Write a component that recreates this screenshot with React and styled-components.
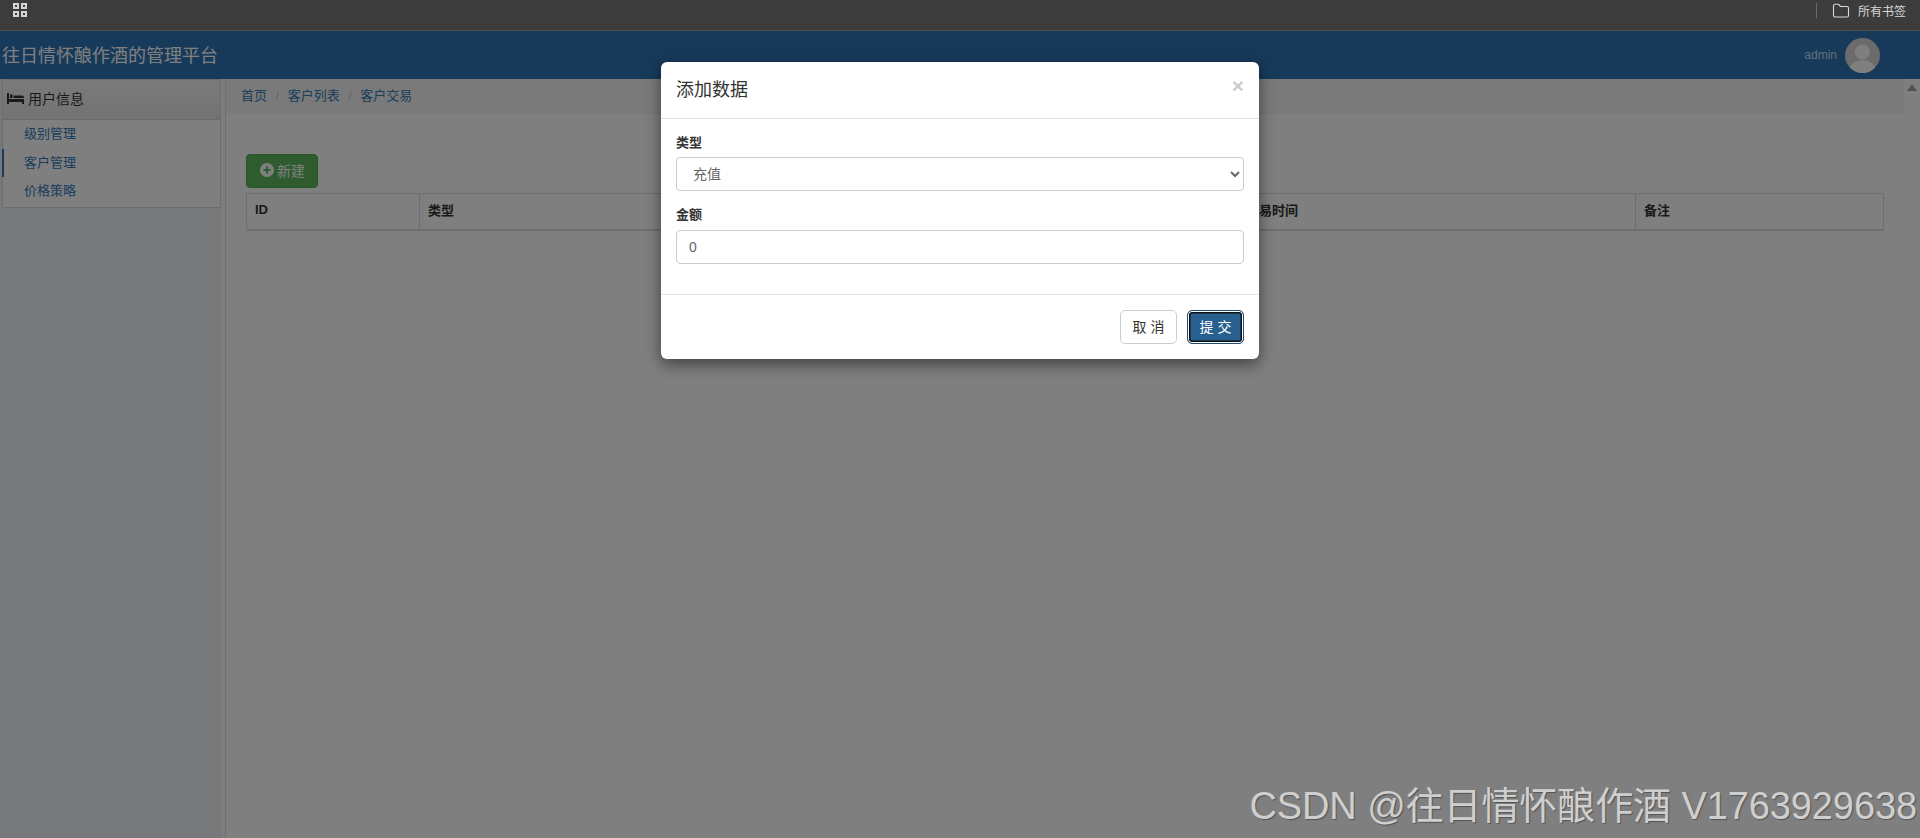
import React from 'react';
import styled, { createGlobalStyle } from 'styled-components';
import { Folder } from 'lucide-react';

const FONT = '"Liberation Sans", "Noto Sans CJK SC", sans-serif';

const GlobalStyle = createGlobalStyle`
  html, body { margin: 0; padding: 0; height: 100%; overflow: hidden; background: #fff; }
  body { font-family: ${FONT}; font-size: 14px; color: #333; }
  * { box-sizing: border-box; }
`;

const Page = styled.div`
  position: relative;
  display: flex;
  flex-direction: column;
  width: 1920px;
  height: 838px;
  overflow: hidden;
`;

const BookmarkBar = styled.div`
  display: flex;
  align-items: flex-start;
  justify-content: space-between;
  height: 31px;
  padding: 3px 14px 0 13px;
  background: #3c3c3c;
  border-bottom: 1px solid #4e4e4e;
`;

const AllBookmarks = styled.div`
  display: flex;
  align-items: center;
  height: 15px;
  color: #d8d8d8;
  font-size: 12px;
`;

const Separator = styled.span`
  width: 1px;
  height: 15px;
  margin-right: 15px;
  background: #6a6a6a;
`;

const BookmarkLabel = styled.span`
  margin-left: 8px;
`;

const Navbar = styled.header`
  display: flex;
  align-items: center;
  justify-content: space-between;
  height: 48px;
  padding: 0 40px 0 2px;
  background: #2e74b4;
`;

const Brand = styled.div`
  padding-bottom: 2px;
  color: #fff;
  font-size: 18px;
`;

const UserBox = styled.div`
  display: flex;
  align-items: center;
  gap: 8px;
  color: #c4e0ee;
  font-size: 12px;
`;

const Body = styled.div`
  display: flex;
  flex: 1;
  min-height: 0;
`;

const Sidebar = styled.aside`
  width: 226px;
  padding-right: 4px;
  background: #fafafa;
  border-right: 1px solid #e0e0e0;
`;

const SidebarFill = styled.div`
  height: 100%;
  padding-left: 2px;
  background: #ecf0f4;
`;

const MenuHeading = styled.div`
  display: flex;
  align-items: center;
  gap: 4px;
  height: 41px;
  padding: 0 0 3px 4px;
  color: #333;
  font-size: 14px;
  background: linear-gradient(#f5f5f5, #e6e6e6);
  border: 1px solid #ddd;
  border-bottom-color: #d4d4d4;
`;

const MenuList = styled.ul`
  margin: 0;
  padding: 0 0 1px;
  list-style: none;
  background: #fff;
  border: 1px solid #ddd;
  border-top: 0;
`;

const MenuItem = styled.li`
  height: 28.5px;
  margin-left: -1px;
  padding-left: 20px;
  color: #337ab7;
  font-size: 13px;
  line-height: 28px;
  border-left: 2px solid ${(p) => (p.$active ? '#337ab7' : 'transparent')};
`;

const Main = styled.main`
  flex: 1;
  min-width: 0;
`;

const Breadcrumb = styled.ol`
  display: flex;
  align-items: center;
  height: 35px;
  margin: 0 0 40px;
  padding: 0 15px 4px;
  list-style: none;
  font-size: 13px;
  background: #f5f5f5;
  border-radius: 0 0 4px 4px;
`;

const Crumb = styled.li`
  color: #337ab7;
  & + &::before {
    content: '/';
    padding: 0 8.5px;
    color: #ccc;
  }
`;

const Content = styled.div`
  padding: 0 20px;
`;

const NewButton = styled.button`
  display: flex;
  align-items: center;
  gap: 3px;
  width: 72px;
  height: 34px;
  margin-bottom: 5px;
  padding: 0 0 2px 13px;
  color: #fff;
  font-family: ${FONT};
  font-size: 14px;
  background: #5cb85c;
  border: 1px solid #4cae4c;
  border-radius: 4px;
`;

const Table = styled.table`
  width: 1637px;
  border-collapse: collapse;
  table-layout: fixed;
`;

const HeadCell = styled.th`
  width: ${(p) => p.$width}px;
  height: 36px;
  padding: 0 8px 4px;
  color: #333;
  font-size: 13px;
  font-weight: 700;
  text-align: left;
  border: 1px solid #ddd;
  border-bottom-width: 2px;
`;

const Scrollbar = styled.div`
  display: flex;
  justify-content: center;
  width: 16px;
  padding-top: 5px;
  background: #fff;
`;

const ScrollArrow = styled.span`
  width: 0;
  height: 0;
  border-left: 5px solid transparent;
  border-right: 5px solid transparent;
  border-bottom: 7px solid #a0a0a0;
`;

const Backdrop = styled.div`
  position: absolute;
  top: 31px;
  left: 0;
  right: 0;
  bottom: 0;
  background: rgba(0, 0, 0, 0.5);
`;

const Modal = styled.div`
  position: absolute;
  top: 62px;
  left: 661px;
  width: 598px;
  height: 297px;
  background: #fff;
  border-radius: 6px;
  box-shadow: 0 5px 15px rgba(0, 0, 0, 0.5);
`;

const ModalHeader = styled.div`
  display: flex;
  align-items: center;
  justify-content: space-between;
  height: 57px;
  padding: 0 15px 5px;
  border-bottom: 1px solid #e5e5e5;
`;

const ModalTitle = styled.h4`
  margin: 0;
  color: #333;
  font-size: 18px;
  font-weight: 400;
`;

const CloseMark = styled.span`
  margin-top: -5px;
  color: #000;
  font-size: 21px;
  font-weight: 700;
  line-height: 1;
  opacity: 0.2;
`;

const ModalBody = styled.div`
  height: 175px;
  padding: 15px 15px 0;
`;

const FieldLabel = styled.label`
  display: block;
  height: 23px;
  color: #333;
  font-size: 13px;
  font-weight: 700;
  line-height: 18px;
`;

const fieldStyle = `
  display: block;
  width: 100%;
  height: 34px;
  padding: 6px 12px;
  color: #666;
  font-family: ${FONT};
  font-size: 14px;
  background: #fff;
  border: 1px solid #ccc;
  border-radius: 4px;
`;

const SelectField = styled.select`
  ${fieldStyle}
  margin-bottom: 15px;
`;

const InputField = styled.input`
  ${fieldStyle}
  margin-top: 1px;
`;

const ModalFooter = styled.div`
  display: flex;
  justify-content: flex-end;
  gap: 10px;
  height: 65px;
  padding: 15px 15px 0;
  border-top: 1px solid #e5e5e5;
`;

const FooterButton = styled.button`
  width: 57px;
  height: 34px;
  padding: 0 0 2px;
  color: ${(p) => (p.$primary ? '#fff' : '#333')};
  font-family: ${FONT};
  font-size: 14px;
  background: ${(p) => (p.$primary ? '#286090' : '#fff')};
  border: 1px solid ${(p) => (p.$primary ? '#204d74' : '#ccc')};
  border-radius: 5px;
  box-shadow: ${(p) => (p.$primary ? 'inset 0 0 0 1px #fff, inset 0 0 0 2.5px #101010' : 'none')};
`;

const Watermark = styled.div`
  position: absolute;
  right: 3px;
  bottom: 10px;
  color: #cfcfcf;
  font-size: 38px;
  line-height: 44px;
  letter-spacing: -0.1px;
  white-space: nowrap;
  text-shadow: 1px 1px 1px rgba(0, 0, 0, 0.35);
`;

const AppsIcon = () => (
  <svg width="14" height="14" viewBox="0 0 14 14" aria-hidden="true">
    <path fill="#d4d4d4" fillRule="evenodd" d="M0 0h6v6H0zM2 2v2h2V2zM8 0h6v6H8zM10 2v2h2V2zM0 8h6v6H0zM2 10v2h2v-2zM8 8h6v6H8zM10 10v2h2v-2z" />
  </svg>
);

const BedIcon = () => (
  <svg width="17" height="11" viewBox="0 0 17 11" aria-hidden="true">
    <path fill="#333" d="M0 0h2v6h15v5h-2V9H2v2H0zM3 1.500h2.500v3.500H3zM6.500 2.500H15A2 2 0 0 1 17 4.500V5H6.500z" />
  </svg>
);

const PlusCircleIcon = () => (
  <svg width="14" height="14" viewBox="0 0 14 14" aria-hidden="true">
    <circle cx="7" cy="7" r="7" fill="#fff" />
    <path fill="#5cb85c" d="M6 3.500h2V6h2.500v2H8v2.500H6V8H3.500V6H6z" />
  </svg>
);

const Avatar = () => (
  <svg width="35" height="35" viewBox="0 0 35 35" aria-hidden="true">
    <defs>
      <clipPath id="avatar-clip"><circle cx="17.500" cy="17.500" r="17.500" /></clipPath>
    </defs>
    <g clipPath="url(#avatar-clip)">
      <rect width="35" height="35" fill="#d6d6d6" />
      <circle cx="17.500" cy="14" r="7.500" fill="#fff" />
      <ellipse cx="17.500" cy="32" rx="13" ry="10" fill="#fff" />
    </g>
  </svg>
);

const columns = [
  { label: 'ID', width: 173 },
  { label: '类型', width: 272 },
  { label: '金额', width: 273 },
  { label: '余额', width: 273 },
  { label: '交易时间', width: 398 },
  { label: '备注', width: 248 },
];

const App = () => (
  <Page>
    <GlobalStyle />
    <BookmarkBar>
      <AppsIcon />
      <AllBookmarks>
        <Separator />
        <Folder size={18} strokeWidth={1.5} color="#d8d8d8" />
        <BookmarkLabel>所有书签</BookmarkLabel>
      </AllBookmarks>
    </BookmarkBar>
    <Navbar>
      <Brand>往日情怀酿作酒的管理平台</Brand>
      <UserBox>
        admin
        <Avatar />
      </UserBox>
    </Navbar>
    <Body>
      <Sidebar>
        <SidebarFill>
          <MenuHeading>
            <BedIcon />
            用户信息
          </MenuHeading>
          <MenuList>
            <MenuItem>级别管理</MenuItem>
            <MenuItem $active>客户管理</MenuItem>
            <MenuItem>价格策略</MenuItem>
          </MenuList>
        </SidebarFill>
      </Sidebar>
      <Main>
        <Breadcrumb>
          <Crumb>首页</Crumb>
          <Crumb>客户列表</Crumb>
          <Crumb>客户交易</Crumb>
        </Breadcrumb>
        <Content>
          <NewButton>
            <PlusCircleIcon />
            新建
          </NewButton>
          <Table>
            <thead>
              <tr>
                {columns.map((col) => (
                  <HeadCell key={col.label} $width={col.width}>{col.label}</HeadCell>
                ))}
              </tr>
            </thead>
          </Table>
        </Content>
      </Main>
      <Scrollbar>
        <ScrollArrow />
      </Scrollbar>
    </Body>
    <Backdrop />
    <Modal>
      <ModalHeader>
        <ModalTitle>添加数据</ModalTitle>
        <CloseMark>×</CloseMark>
      </ModalHeader>
      <ModalBody>
        <FieldLabel>类型</FieldLabel>
        <SelectField defaultValue="1">
          <option value="1">充值</option>
          <option value="2">扣款</option>
        </SelectField>
        <FieldLabel>金额</FieldLabel>
        <InputField defaultValue="0" />
      </ModalBody>
      <ModalFooter>
        <FooterButton>取 消</FooterButton>
        <FooterButton $primary>提 交</FooterButton>
      </ModalFooter>
    </Modal>
    <Watermark>CSDN @往日情怀酿作酒 V1763929638</Watermark>
  </Page>
);

export default App;
